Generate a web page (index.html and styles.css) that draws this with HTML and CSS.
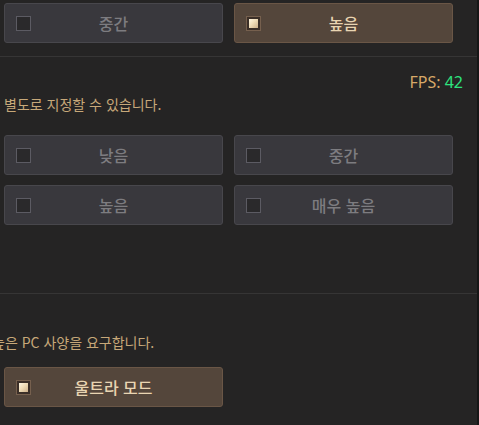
FILE: index.html
```html
<!DOCTYPE html>
<html lang="ko">
<head>
<meta charset="utf-8">
<link rel="stylesheet" href="styles.css">
</head>
<body>
<div class="panel">
  <div class="grid top">
    <div class="opt"><span class="box"></span><span class="label">중간</span><span></span></div>
    <div class="opt on"><span class="box"></span><span class="label">높음</span><span></span></div>
  </div>
  <div class="divider first"></div>
  <div class="fps">FPS: <span class="num">42</span></div>
  <p class="desc one">별도로 지정할 수 있습니다.</p>
  <div class="grid rows">
    <div class="opt"><span class="box"></span><span class="label">낮음</span><span></span></div>
    <div class="opt"><span class="box"></span><span class="label">중간</span><span></span></div>
    <div class="opt"><span class="box"></span><span class="label">높음</span><span></span></div>
    <div class="opt"><span class="box"></span><span class="label">매우 높음</span><span></span></div>
  </div>
  <div class="divider second"></div>
  <p class="desc two">높은 PC 사양을 요구합니다.</p>
  <div class="grid ultra">
    <div class="opt on"><span class="box"></span><span class="label">울트라 모드</span><span></span></div>
  </div>
</div>
</body>
</html>
```
FILE: styles.css
```css
html, body {
  margin: 0;
  padding: 0;
}
body {
  width: 477px;
  height: 425px;
  overflow: hidden;
  background: #252424;
  border-right: 2px solid #161616;
  font-family: "Noto Sans CJK KR", "Noto Sans", sans-serif;
}
.panel {
  padding: 3px 0 0 4px;
}
.grid {
  display: grid;
  grid-template-columns: 219px 219px;
  column-gap: 11px;
  row-gap: 10px;
}
.opt {
  box-sizing: border-box;
  height: 40px;
  display: grid;
  grid-template-columns: 27px 1fr 27px;
  align-items: center;
  background: #39383d;
  border: 1px solid #48474c;
  border-radius: 3px;
  color: #7d7c80;
  font-size: 16px;
  font-weight: 500;
}
.opt .label {
  text-align: center;
  line-height: 20px;
}
.box {
  box-sizing: border-box;
  width: 15px;
  height: 15px;
  margin-left: 11px;
  border: 1px solid #5c5b63;
  background: #2a292b;
  position: relative;
}
.opt.on {
  background: #54463b;
  border-color: #6a5646;
  color: #e9d5b2;
}
.opt.on .box {
  border-color: #76604e;
  background: #3b2f28;
}
.opt.on .box::after {
  content: "";
  position: absolute;
  left: 2px;
  top: 2px;
  right: 2px;
  bottom: 2px;
  background: linear-gradient(135deg, #fff6e2 0%, #f0ddb8 45%, #cdb08a 100%);
}
.divider {
  height: 1px;
  background: #363535;
  margin-left: -4px;
}
.divider.first {
  margin-top: 13px;
}
.fps {
  margin-top: 15px;
  text-align: right;
  padding-right: 14px;
  font-family: "Noto Sans", sans-serif;
  font-size: 16px;
  line-height: 20px;
  color: #d8a968;
}
.fps .num {
  color: #2de37e;
}
.desc {
  margin: 0;
  font-size: 14px;
  line-height: 20px;
  color: #c7a879;
}
.desc.one {
  margin-top: 2px;
}
.rows {
  margin-top: 21px;
}
.divider.second {
  margin-top: 68px;
}
.desc.two {
  margin-top: 38px;
  text-indent: -12px;
}
.ultra {
  margin-top: 15px;
}
```
